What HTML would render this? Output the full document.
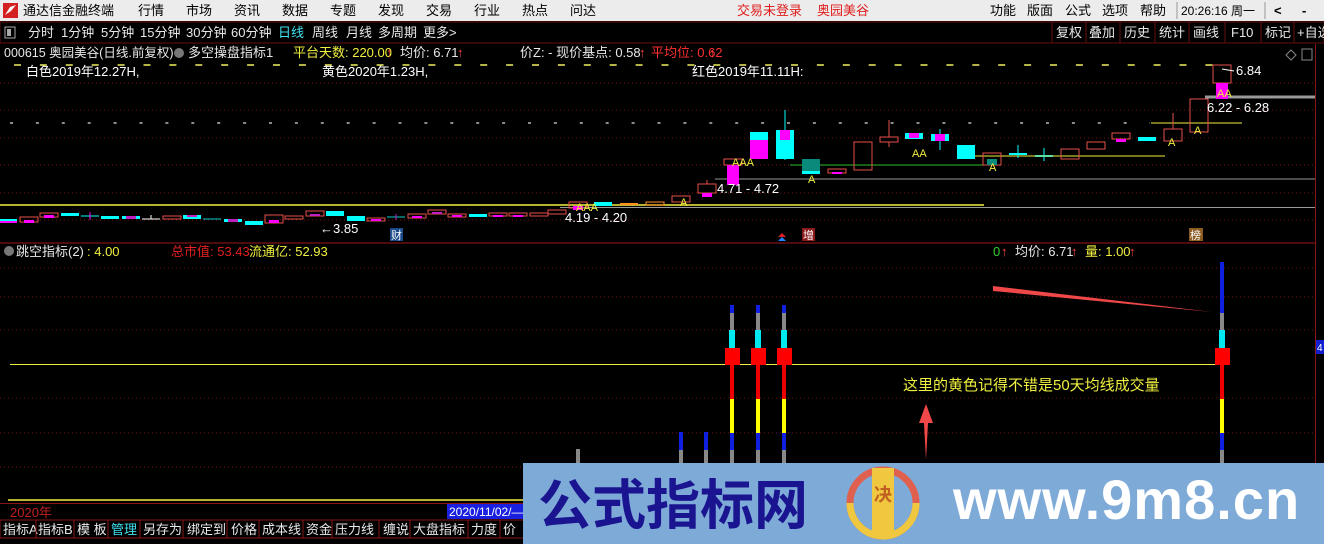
<!DOCTYPE html>
<html><head><meta charset="utf-8"><style>
html,body{margin:0;padding:0;background:#000;width:1324px;height:544px;overflow:hidden}
svg{display:block}
</style></head><body>
<svg width="1324" height="544" viewBox="0 0 1324 544" xmlns="http://www.w3.org/2000/svg" font-family="'Liberation Sans','Noto Sans CJK SC',sans-serif" font-size="13">
<rect width="1324" height="544" fill="#000"/>
<!-- top menu -->
<rect x="0" y="0" width="1324" height="21" fill="#ececec"/>
<rect x="3" y="3" width="15" height="15" fill="#d42020"/>
<path d="M5 15 L10 7 L16 5 L11 11 Z" fill="#fff"/>
<g fill="#000">
<text x="23" y="15">通达信金融终端</text>
<text x="138" y="15">行情</text><text x="186" y="15">市场</text><text x="234" y="15">资讯</text><text x="282" y="15">数据</text><text x="330" y="15">专题</text><text x="378" y="15">发现</text><text x="426" y="15">交易</text><text x="474" y="15">行业</text><text x="522" y="15">热点</text><text x="570" y="15">问达</text>
<text x="990" y="15">功能</text><text x="1027" y="15">版面</text><text x="1065" y="15">公式</text><text x="1102" y="15">选项</text><text x="1140" y="15">帮助</text>
<text x="1181" y="15" font-size="12">20:26:16 周一</text>
<text x="1274" y="15" font-weight="bold">&lt;</text><text x="1302" y="15" font-weight="bold">-</text>
</g>
<text x="737" y="15" fill="#e02020">交易未登录</text><text x="817" y="15" fill="#e02020">奥园美谷</text>
<line x1="1177" y1="2" x2="1177" y2="19" stroke="#999"/><line x1="1265" y1="2" x2="1265" y2="19" stroke="#999"/>
<!-- toolbar -->
<rect x="0" y="22" width="1324" height="21" fill="#000" stroke="#6a1010"/>
<rect x="5" y="27" width="10" height="11" fill="none" stroke="#aaa"/><rect x="7" y="29" width="4" height="7" fill="#aaa"/>
<g fill="#e8e8e8">
<text x="28" y="37">分时</text><text x="61" y="37">1分钟</text><text x="101" y="37">5分钟</text><text x="140" y="37">15分钟</text><text x="186" y="37">30分钟</text><text x="231" y="37">60分钟</text>
<text x="312" y="37">周线</text><text x="346" y="37">月线</text><text x="378" y="37">多周期</text><text x="423" y="37">更多&gt;</text>
<text x="1056" y="37">复权</text><text x="1089" y="37">叠加</text><text x="1124" y="37">历史</text><text x="1159" y="37">统计</text><text x="1193" y="37">画线</text><text x="1231" y="37">F10</text><text x="1265" y="37">标记</text><text x="1297" y="37">+自选</text>
</g>
<text x="278" y="37" fill="#40e0f0">日线</text>
<g stroke="#6a1010"><line x1="1052" y1="22" x2="1052" y2="43"/><line x1="1086" y1="22" x2="1086" y2="43"/><line x1="1120" y1="22" x2="1120" y2="43"/><line x1="1155" y1="22" x2="1155" y2="43"/><line x1="1189" y1="22" x2="1189" y2="43"/><line x1="1225" y1="22" x2="1225" y2="43"/><line x1="1261" y1="22" x2="1261" y2="43"/><line x1="1294" y1="22" x2="1294" y2="43"/></g>
<!-- right axis -->
<line x1="1315.5" y1="44" x2="1315.5" y2="520" stroke="#8a1515"/>
<!-- info line -->
<text x="4" y="57" fill="#e8e8e8" font-size="12.5">000615 奥园美谷(日线.前复权)</text>
<circle cx="179" cy="53" r="5" fill="#777"/>
<text x="188" y="57" fill="#e8e8e8">多空操盘指标1</text>
<text x="293" y="57" fill="#f0f040">平台天数: 220.00</text><text x="386" y="57" fill="#ff4040">↑</text>
<text x="400" y="57" fill="#e8e8e8">均价: 6.71</text><text x="457" y="57" fill="#ff4040">↑</text>
<text x="520" y="57" fill="#e8e8e8">价Z: -   现价基点: 0.58</text><text x="639" y="57" fill="#ff4040">↑</text>
<text x="651" y="57" fill="#ff3030">平均位: 0.62</text><text x="709" y="57" fill="#ff4040">↑</text>
<path d="M1291 50 L1296 55 L1291 60 L1286 55 Z" fill="none" stroke="#888"/>
<rect x="1302" y="49" width="10" height="11" fill="none" stroke="#888"/>
<text x="26" y="76" fill="#fff">白色2019年12.27H,</text>
<text x="322" y="76" fill="#fff">黄色2020年1.23H,</text>
<text x="692" y="76" fill="#fff">红色2019年11.11H:</text>
<!-- grid dotted -->
<g stroke="#7a1010" stroke-dasharray="1,3">
<line x1="0" y1="83" x2="1315" y2="83"/><line x1="0" y1="110" x2="1315" y2="110"/><line x1="0" y1="138" x2="1315" y2="138"/><line x1="0" y1="165" x2="1315" y2="165"/><line x1="0" y1="193" x2="1315" y2="193"/><line x1="0" y1="220" x2="1315" y2="220"/>
<line x1="0" y1="268" x2="1315" y2="268"/><line x1="0" y1="297" x2="1315" y2="297"/><line x1="0" y1="330" x2="1315" y2="330"/><line x1="0" y1="398" x2="1315" y2="398"/><line x1="0" y1="433" x2="1315" y2="433"/><line x1="0" y1="467" x2="1315" y2="467"/>
</g>
<!-- dash rows -->
<g stroke="#f0f060" stroke-width="1.5" stroke-dasharray="7,18.9"><line x1="14" y1="65" x2="1230" y2="65"/></g>
<g stroke="#ddd" stroke-width="1.2" stroke-dasharray="3,22.9"><line x1="10" y1="123" x2="1150" y2="123"/></g>
<!-- horizontal lines -->
<line x1="0" y1="205" x2="984" y2="205" stroke="#f0f040" stroke-width="1.5"/>
<line x1="560" y1="207.5" x2="1315" y2="207.5" stroke="#999"/>
<line x1="715" y1="179" x2="1315" y2="179" stroke="#999"/>
<line x1="790" y1="165" x2="985" y2="165" stroke="#30c030"/>
<line x1="972" y1="156" x2="1165" y2="156" stroke="#f0f040"/>
<line x1="1151" y1="123" x2="1242" y2="123" stroke="#f0f040"/>
<line x1="1205" y1="97" x2="1315" y2="97" stroke="#999" stroke-width="3"/>
<!-- candles left -->
<g>
<rect x="-1" y="219" width="18" height="4" fill="#ff00ff"/><rect x="-1" y="219" width="18" height="2" fill="#00ffff"/>
<rect x="20" y="217" width="18" height="5" fill="none" stroke="#e8504a"/><rect x="24" y="220" width="10" height="3" fill="#ff00ff"/>
<rect x="40" y="213" width="18" height="4" fill="none" stroke="#e8504a"/><rect x="44" y="215" width="10" height="3" fill="#ff00ff"/>
<rect x="61" y="213" width="18" height="3" fill="#00ffff"/>
<line x1="81" y1="216" x2="99" y2="216" stroke="#00ffff"/><line x1="90" y1="212" x2="90" y2="220" stroke="#ff00ff"/>
<rect x="101" y="216" width="18" height="3" fill="#00ffff"/>
<rect x="122" y="216" width="18" height="3" fill="#00ffff"/><rect x="126" y="216" width="10" height="3" fill="#c020c0"/>
<line x1="142" y1="219" x2="160" y2="219" stroke="#fff"/><line x1="151" y1="215" x2="151" y2="219" stroke="#fff"/>
<rect x="163" y="216" width="18" height="3" fill="none" stroke="#e8504a"/>
<rect x="183" y="215" width="18" height="4" fill="#00ffff"/><rect x="187" y="215" width="10" height="2" fill="#c020c0"/>
<line x1="203" y1="219" x2="221" y2="219" stroke="#00cccc"/>
<rect x="224" y="219" width="18" height="3" fill="#00ffff"/><rect x="228" y="219" width="10" height="3" fill="#c020c0"/>
<rect x="245" y="221" width="18" height="4" fill="#00ffff"/>
<rect x="265" y="215" width="18" height="8" fill="none" stroke="#e8504a"/><rect x="269" y="220" width="10" height="3" fill="#ff00ff"/>
<rect x="285" y="216" width="18" height="3" fill="none" stroke="#e8504a"/>
<rect x="306" y="211" width="18" height="5" fill="none" stroke="#e8504a"/><rect x="310" y="214" width="10" height="2" fill="#c020c0"/>
<rect x="326" y="211" width="18" height="5" fill="#00ffff"/>
<rect x="347" y="216" width="18" height="5" fill="#00ffff"/>
<rect x="367" y="218" width="18" height="3" fill="none" stroke="#e8504a"/><rect x="371" y="219" width="10" height="2" fill="#ff00ff"/>
<line x1="387" y1="217" x2="405" y2="217" stroke="#00cccc"/><line x1="396" y1="214" x2="396" y2="220" stroke="#c020c0"/>
<rect x="408" y="214" width="18" height="4" fill="none" stroke="#e8504a"/><rect x="412" y="216" width="10" height="2" fill="#ff00ff"/>
<rect x="428" y="210" width="18" height="4" fill="none" stroke="#e8504a"/><rect x="432" y="212" width="10" height="2" fill="#c020c0"/>
<rect x="448" y="214" width="18" height="3" fill="none" stroke="#e8504a"/><rect x="452" y="215" width="10" height="2" fill="#ff00ff"/>
<rect x="469" y="214" width="18" height="3" fill="#00ffff"/>
<rect x="489" y="213" width="18" height="3" fill="none" stroke="#e8504a"/><rect x="493" y="215" width="10" height="2" fill="#ff00ff"/>
<rect x="509" y="213" width="18" height="3" fill="none" stroke="#e8504a"/><rect x="513" y="215" width="10" height="2" fill="#ff00ff"/>
<rect x="530" y="213" width="18" height="3" fill="none" stroke="#e8504a"/>
<rect x="548" y="210" width="18" height="4" fill="none" stroke="#e8504a"/>
<rect x="569" y="202" width="18" height="6" fill="none" stroke="#e8504a"/><rect x="573" y="206" width="10" height="4" fill="#ff00ff"/>
<rect x="594" y="202" width="18" height="4" fill="#00ffff"/>
<line x1="620" y1="204" x2="638" y2="204" stroke="#ff9020" stroke-width="2"/>
<rect x="646" y="202" width="18" height="3" fill="none" stroke="#ff9020"/>
<rect x="672" y="196" width="18" height="6" fill="none" stroke="#e8504a"/>
</g>
<!-- candles right -->
<g>
<rect x="698" y="184" width="18" height="9" fill="none" stroke="#e8504a"/><rect x="702" y="193" width="10" height="4" fill="#ff00ff"/><line x1="707" y1="180" x2="707" y2="184" stroke="#e8504a"/>
<rect x="724" y="159" width="18" height="6" fill="none" stroke="#e8504a"/><rect x="727" y="165" width="12" height="20" fill="#ff00ff"/>
<rect x="750" y="132" width="18" height="27" fill="#ff00ff"/><rect x="750" y="132" width="18" height="8" fill="#00ffff"/>
<line x1="785" y1="110" x2="785" y2="160" stroke="#00ffff"/><rect x="776" y="130" width="18" height="29" fill="#00ffff"/><rect x="780" y="130" width="10" height="10" fill="#ff00ff"/>
<rect x="802" y="159" width="18" height="14" fill="#0a8a7a"/><rect x="802" y="171" width="18" height="3" fill="#00ffff"/>
<rect x="828" y="169" width="18" height="4" fill="none" stroke="#e8504a"/><rect x="832" y="172" width="10" height="2" fill="#ff00ff"/>
<rect x="854" y="142" width="18" height="28" fill="none" stroke="#e8504a"/>
<line x1="889" y1="120" x2="889" y2="147" stroke="#e8504a"/><rect x="880" y="137" width="18" height="5" fill="#000" stroke="#e8504a"/>
<rect x="905" y="133" width="18" height="6" fill="#00ffff"/><rect x="909" y="133" width="10" height="5" fill="#ff00ff"/>
<line x1="940" y1="129" x2="940" y2="150" stroke="#00ffff"/><rect x="931" y="134" width="18" height="7" fill="#00ffff"/><rect x="935" y="134" width="10" height="7" fill="#ff00ff"/>
<rect x="957" y="145" width="18" height="14" fill="#00ffff"/>
<rect x="983" y="153" width="18" height="12" fill="none" stroke="#e8504a"/><rect x="987" y="159" width="10" height="6" fill="#0a8a7a"/>
<line x1="1018" y1="145" x2="1018" y2="158" stroke="#00ffff"/><rect x="1009" y="153" width="18" height="2" fill="#00ffff"/>
<line x1="1044" y1="148" x2="1044" y2="161" stroke="#00ffff"/><rect x="1035" y="155" width="18" height="2" fill="#60e0a0"/>
<rect x="1061" y="149" width="18" height="10" fill="none" stroke="#e8504a"/>
<rect x="1087" y="142" width="18" height="7" fill="none" stroke="#e8504a"/>
<rect x="1112" y="133" width="18" height="6" fill="none" stroke="#e8504a"/><rect x="1116" y="139" width="10" height="3" fill="#ff00ff"/>
<rect x="1138" y="137" width="18" height="4" fill="#00ffff"/>
<line x1="1173" y1="113" x2="1173" y2="129" stroke="#e8504a"/><rect x="1164" y="129" width="18" height="12" fill="none" stroke="#e8504a"/>
<rect x="1190" y="99" width="18" height="33" fill="none" stroke="#e8504a"/>
<rect x="1213" y="65" width="18" height="18" fill="none" stroke="#e8504a"/><rect x="1216" y="83" width="12" height="16" fill="#ff00ff"/>
</g>
<!-- AA labels -->
<g fill="#f0f040" font-size="11">
<text x="576" y="211">AAA</text><text x="732" y="166">AAA</text><text x="808" y="183">A</text>
<text x="912" y="157">AA</text><text x="989" y="171">A</text><text x="1168" y="146">A</text><text x="1194" y="134">A</text><text x="1217" y="97">AA</text>
<text x="680" y="206">A</text>
</g>
<g fill="#fff">
<text x="565" y="222">4.19 - 4.20</text>
<text x="717" y="193">4.71 - 4.72</text>
<text x="1207" y="112">6.22 - 6.28</text>
<text x="1236" y="75">6.84</text>
<text x="320" y="233">←3.85</text>
</g>
<line x1="1222" y1="69" x2="1234" y2="71" stroke="#fff"/>
<rect x="390" y="228" width="13" height="13" fill="#1a4a8a"/><text x="391" y="239" fill="#fff" font-size="11">财</text>
<path d="M782 233 L786 237 L778 237 Z" fill="#e02020"/><path d="M782 237 L786 241 L778 241 Z" fill="#2080ff"/>
<rect x="802" y="228" width="13" height="13" fill="#8a1a1a"/><text x="803" y="239" fill="#fff" font-size="11">增</text>
<rect x="1189" y="228" width="14" height="13" fill="#8a5a20"/><text x="1190" y="239" fill="#fff" font-size="11">榜</text>
<!-- separator -->
<line x1="0" y1="243" x2="1315" y2="243" stroke="#a01818"/>
<!-- indicator header -->
<circle cx="9" cy="251" r="5" fill="#777"/>
<text x="16" y="256" fill="#e8e8e8">跳空指标(2)</text><text x="87" y="256" fill="#f0f040">: 4.00</text>
<text x="171" y="256" fill="#e02020">总市值: 53.43</text>
<text x="249" y="256" fill="#f0f040">流通亿: 52.93</text>
<text x="993" y="256" fill="#30d030">0</text><text x="1001" y="256" fill="#ff4040">↑</text>
<text x="1015" y="256" fill="#e8e8e8">均价: 6.71</text><text x="1071" y="256" fill="#ff4040">↑</text>
<text x="1085" y="256" fill="#f0f040">量: 1.00</text><text x="1129" y="256" fill="#ff4040">↑</text>
<!-- indicator -->
<line x1="10" y1="364.5" x2="1230" y2="364.5" stroke="#f0f040"/>
<g>
<rect x="576" y="449" width="4" height="14" fill="#888"/>
<rect x="679" y="432" width="4" height="18" fill="#1020e0"/><rect x="679" y="450" width="4" height="13" fill="#888"/>
<rect x="704" y="432" width="4" height="18" fill="#1020e0"/><rect x="704" y="450" width="4" height="13" fill="#888"/>
</g>
<g>
<rect x="730" y="305" width="4" height="8" fill="#1020e0"/><rect x="730" y="313" width="4" height="17" fill="#888"/><rect x="729" y="330" width="6" height="18" fill="#00e8f0"/><rect x="725" y="348" width="15" height="17" fill="#f00"/><rect x="730" y="365" width="4" height="34" fill="#e00"/><rect x="730" y="399" width="4" height="34" fill="#ff0"/><rect x="730" y="433" width="4" height="17" fill="#1020e0"/><rect x="730" y="450" width="4" height="13" fill="#888"/>
<rect x="756" y="305" width="4" height="8" fill="#1020e0"/><rect x="756" y="313" width="4" height="17" fill="#888"/><rect x="755" y="330" width="6" height="18" fill="#00e8f0"/><rect x="751" y="348" width="15" height="17" fill="#f00"/><rect x="756" y="365" width="4" height="34" fill="#e00"/><rect x="756" y="399" width="4" height="34" fill="#ff0"/><rect x="756" y="433" width="4" height="17" fill="#1020e0"/><rect x="756" y="450" width="4" height="13" fill="#888"/>
<rect x="782" y="305" width="4" height="8" fill="#1020e0"/><rect x="782" y="313" width="4" height="17" fill="#888"/><rect x="781" y="330" width="6" height="18" fill="#00e8f0"/><rect x="777" y="348" width="15" height="17" fill="#f00"/><rect x="782" y="365" width="4" height="34" fill="#e00"/><rect x="782" y="399" width="4" height="34" fill="#ff0"/><rect x="782" y="433" width="4" height="17" fill="#1020e0"/><rect x="782" y="450" width="4" height="13" fill="#888"/>
<rect x="1220" y="262" width="4" height="51" fill="#1020e0"/><rect x="1220" y="313" width="4" height="17" fill="#888"/><rect x="1219" y="330" width="6" height="18" fill="#00e8f0"/><rect x="1215" y="348" width="15" height="17" fill="#f00"/><rect x="1220" y="365" width="4" height="34" fill="#e00"/><rect x="1220" y="399" width="4" height="34" fill="#ff0"/><rect x="1220" y="433" width="4" height="17" fill="#1020e0"/><rect x="1220" y="450" width="4" height="13" fill="#888"/>
</g>
<path d="M993 286 L1212 312 L993 291 Z" fill="#f04848"/>
<path d="M926 404 L933 423 L928 423 L926 460 L924 423 L919 423 Z" fill="#f04848"/>
<text x="903" y="390" fill="#f0f040" font-size="15">这里的黄色记得不错是50天均线成交量</text>
<rect x="1316" y="340" width="8" height="14" fill="#1020d0"/><text x="1317" y="351" fill="#fff" font-size="10">4</text>
<line x1="8" y1="500" x2="1315" y2="500" stroke="#f0f040" stroke-width="1.5"/>
<!-- bottom -->
<line x1="0" y1="503.5" x2="1324" y2="503.5" stroke="#8a1515"/>
<text x="10" y="517" fill="#c02020">2020年</text>
<rect x="447" y="504" width="80" height="15" fill="#1a20e0"/><text x="449" y="516" fill="#fff" font-size="12">2020/11/02/—</text>
<rect x="0" y="520" width="525" height="18" fill="#000" stroke="#8a1515"/>
<g fill="#e8e8e8">
<text x="3" y="534">指标A</text><text x="38" y="534">指标B</text><text x="77" y="534">模 板</text><text x="143" y="534">另存为</text><text x="187" y="534">绑定到</text><text x="231" y="534">价格</text><text x="262" y="534">成本线</text><text x="306" y="534">资金</text><text x="335" y="534">压力线</text><text x="383" y="534">缠说</text><text x="413" y="534">大盘指标</text><text x="471" y="534">力度</text><text x="503" y="534">价</text>
</g>
<text x="111" y="534" fill="#40e0f0">管理</text>
<g stroke="#8a1515"><line x1="36" y1="520" x2="36" y2="538"/><line x1="74" y1="520" x2="74" y2="538"/><line x1="108" y1="520" x2="108" y2="538"/><line x1="140" y1="520" x2="140" y2="538"/><line x1="183" y1="520" x2="183" y2="538"/><line x1="227" y1="520" x2="227" y2="538"/><line x1="259" y1="520" x2="259" y2="538"/><line x1="303" y1="520" x2="303" y2="538"/><line x1="332" y1="520" x2="332" y2="538"/><line x1="379" y1="520" x2="379" y2="538"/><line x1="410" y1="520" x2="410" y2="538"/><line x1="468" y1="520" x2="468" y2="538"/><line x1="500" y1="520" x2="500" y2="538"/></g>
<!-- watermark -->
<rect x="523" y="463" width="801" height="81" fill="#7eaad8"/>
<text x="538" y="524" fill="#1a1490" font-size="54" font-weight="bold" font-family="'Noto Sans CJK SC',sans-serif">公式指标网</text>
<circle cx="883" cy="503" r="33" fill="none" stroke="#e06050" stroke-width="7"/>
<path d="M850 503 A33 33 0 0 0 916 503" fill="none" stroke="#f0c840" stroke-width="7"/>
<rect x="872" y="468" width="22" height="70" fill="#f0c840"/>
<text x="874" y="501" fill="#c06020" font-size="18" font-weight="bold" font-family="'Noto Sans CJK SC',sans-serif">决</text>
<text x="953" y="519" fill="#fff" font-size="56" font-weight="bold" font-family="'Liberation Sans',sans-serif" letter-spacing="1">www.9m8.cn</text>
</svg>
</body></html>
